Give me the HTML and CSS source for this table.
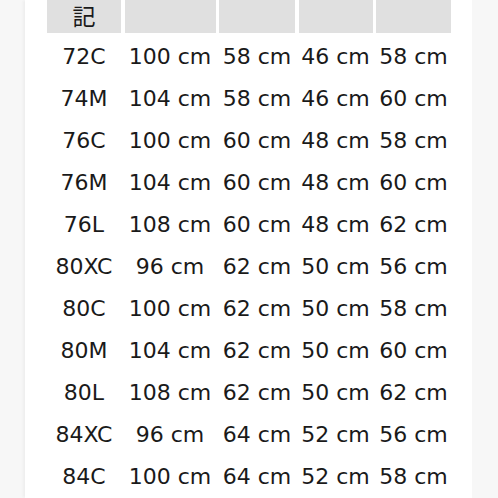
FILE: index.html
```html
<!DOCTYPE html>
<html lang="ja">
<head>
<meta charset="utf-8">
<link rel="stylesheet" href="styles.css">
</head>
<body>
<div class="panel">
  <div class="table">
    <div class="head">記</div><div class="head"></div><div class="head"></div><div class="head"></div><div class="head"></div>
    <div class="cell">72C</div><div class="cell">100 cm</div><div class="cell">58 cm</div><div class="cell">46 cm</div><div class="cell">58 cm</div>
    <div class="cell">74M</div><div class="cell">104 cm</div><div class="cell">58 cm</div><div class="cell">46 cm</div><div class="cell">60 cm</div>
    <div class="cell">76C</div><div class="cell">100 cm</div><div class="cell">60 cm</div><div class="cell">48 cm</div><div class="cell">58 cm</div>
    <div class="cell">76M</div><div class="cell">104 cm</div><div class="cell">60 cm</div><div class="cell">48 cm</div><div class="cell">60 cm</div>
    <div class="cell">76L</div><div class="cell">108 cm</div><div class="cell">60 cm</div><div class="cell">48 cm</div><div class="cell">62 cm</div>
    <div class="cell">80XC</div><div class="cell">96 cm</div><div class="cell">62 cm</div><div class="cell">50 cm</div><div class="cell">56 cm</div>
    <div class="cell">80C</div><div class="cell">100 cm</div><div class="cell">62 cm</div><div class="cell">50 cm</div><div class="cell">58 cm</div>
    <div class="cell">80M</div><div class="cell">104 cm</div><div class="cell">62 cm</div><div class="cell">50 cm</div><div class="cell">60 cm</div>
    <div class="cell">80L</div><div class="cell">108 cm</div><div class="cell">62 cm</div><div class="cell">50 cm</div><div class="cell">62 cm</div>
    <div class="cell">84XC</div><div class="cell">96 cm</div><div class="cell">64 cm</div><div class="cell">52 cm</div><div class="cell">56 cm</div>
    <div class="cell">84C</div><div class="cell">100 cm</div><div class="cell">64 cm</div><div class="cell">52 cm</div><div class="cell">58 cm</div>
  </div>
</div>
</body>
</html>
```
FILE: styles.css
```css
html, body {
  margin: 0;
  padding: 0;
  background: #f7f7f7;
  height: 498px;
  overflow: hidden;
}
.panel {
  margin-left: 25px;
  width: 447px;
  height: 498px;
  background: #ffffff;
  box-shadow: -3px 0 2px -1px #eeeeee;
  padding-left: 22px;
  box-sizing: border-box;
}
.table {
  display: grid;
  grid-template-columns: 74px 91px 76px 74px 75px;
  grid-template-rows: 36px;
  grid-auto-rows: 42px;
  column-gap: 3.5px;
  font-family: "DejaVu Sans", "Noto Sans CJK JP", sans-serif;
  color: #1a1a1a;
}
.head {
  background: #e0e0e0;
  font-family: "Noto Sans CJK JP", sans-serif;
  font-size: 23px;
  line-height: 31px;
  text-align: center;
  height: 33px;
}
.cell {
  font-size: 22px;
  line-height: 42px;
  text-align: center;
  white-space: nowrap;
}
```
